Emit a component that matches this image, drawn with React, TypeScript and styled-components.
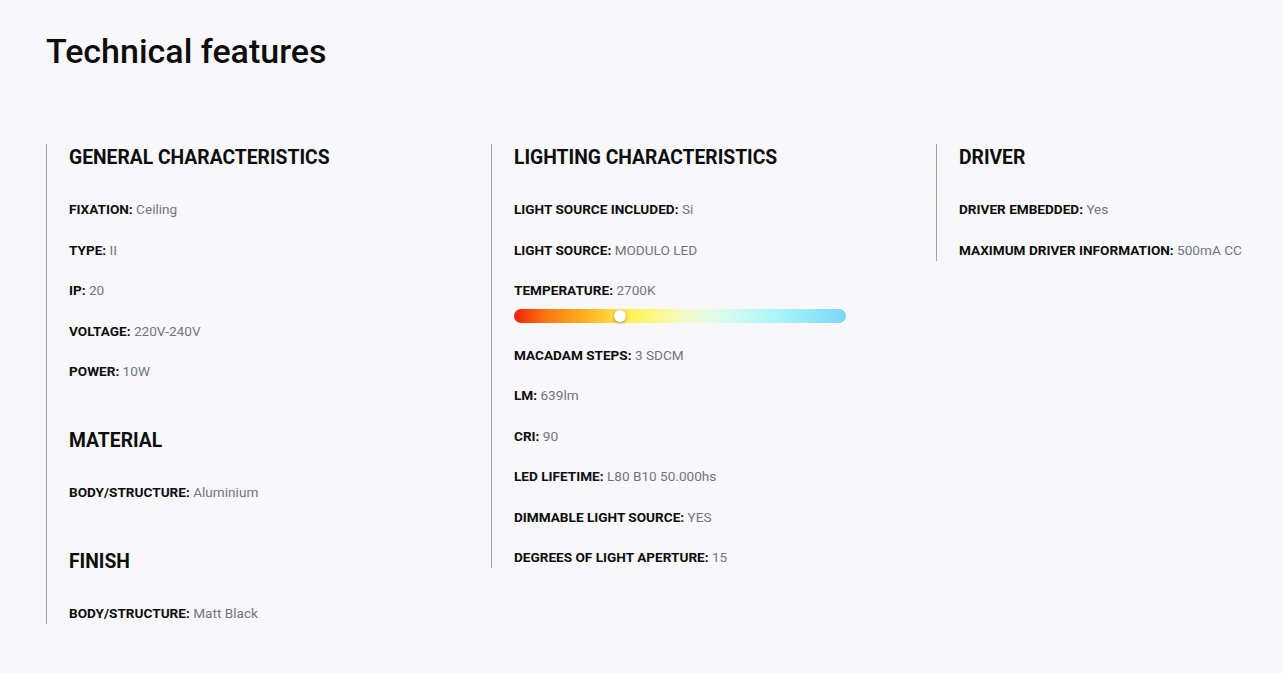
import styled, { createGlobalStyle } from "styled-components";

const GlobalStyle = createGlobalStyle`
  html, body {
    margin: 0;
    padding: 0;
    background: #f8f8fa;
  }
  body {
    font-family: Roboto, "Liberation Sans", Arial, sans-serif;
    color: #111;
  }
`;

const Page = styled.main`
  padding: 28px 0 40px 46px;
  min-height: 673px;
  box-sizing: border-box;
`;

const Title = styled.h1`
  margin: 0 0 70px;
  font-size: 34px;
  line-height: 46px;
  font-weight: 500;
  color: #0d0d0d;
`;

const Columns = styled.div`
  display: grid;
  grid-template-columns: 445px 445px 1fr;
  align-items: start;
`;

const Column = styled.div`
  border-left: 1px solid #a3a3a3;
  padding-left: 22px;
  padding-bottom: 2px;
  display: flex;
  flex-direction: column;
  gap: 47px;
`;

const Section = styled.section`
  display: flex;
  flex-direction: column;
`;

const Heading = styled.h2`
  margin: 1px 0 29px;
  font-size: 19.3px;
  line-height: 26px;
  font-weight: 700;
  color: #0d0d0d;
`;

const Rows = styled.div`
  display: flex;
  flex-direction: column;
  gap: 22.5px;
`;

const Row = styled.div`
  font-size: 13.6px;
  line-height: 18px;
  white-space: nowrap;
`;

const Label = styled.span`
  font-weight: 700;
  color: #0d0d0d;
`;

const Value = styled.span`
  color: #6f7680;
`;

const Track = styled.div`
  position: relative;
  margin-top: 10px;
  width: 332px;
  height: 14px;
  border-radius: 7px;
  background: linear-gradient(
    to right,
    #f2220c 0%,
    #fb7a12 10%,
    #ffb41f 22%,
    #fff35a 36%,
    #f3fbcc 52%,
    #d8fbef 64%,
    #a9f5fa 80%,
    #7bd6f6 100%
  );
`;

const Thumb = styled.div`
  position: absolute;
  top: 1px;
  width: 12px;
  height: 12px;
  border-radius: 50%;
  background: #fff;
  box-shadow: 0 1px 3px rgba(0, 0, 0, 0.35);
  transform: translateX(-50%);
`;

type Item = [string, string];

function Spec({ label, value }: { label: string; value: string }) {
  return (
    <Row>
      <Label>{label}:</Label> <Value>{value}</Value>
    </Row>
  );
}

function Block({ title, items }: { title: string; items: Item[] }) {
  return (
    <Section>
      <Heading>{title}</Heading>
      <Rows>
        {items.map(([l, v]) => (
          <Spec key={l} label={l} value={v} />
        ))}
      </Rows>
    </Section>
  );
}

export default function App() {
  const temp = 2700;
  const pos = ((temp - 1000) / (12000 - 1000)) * 100 * 2.07;

  return (
    <Page>
      <GlobalStyle />
      <Title>Technical features</Title>
      <Columns>
        <Column>
          <Block
            title="GENERAL CHARACTERISTICS"
            items={[
              ["FIXATION", "Ceiling"],
              ["TYPE", "II"],
              ["IP", "20"],
              ["VOLTAGE", "220V-240V"],
              ["POWER", "10W"],
            ]}
          />
          <Block title="MATERIAL" items={[["BODY/STRUCTURE", "Aluminium"]]} />
          <Block title="FINISH" items={[["BODY/STRUCTURE", "Matt Black"]]} />
        </Column>
        <Column>
          <Section>
            <Heading>LIGHTING CHARACTERISTICS</Heading>
            <Rows>
              <Spec label="LIGHT SOURCE INCLUDED" value="Si" />
              <Spec label="LIGHT SOURCE" value="MODULO LED" />
              <div>
                <Spec label="TEMPERATURE" value={`${temp}K`} />
                <Track>
                  <Thumb style={{ left: `${pos}%` }} />
                </Track>
              </div>
              <Spec label="MACADAM STEPS" value="3 SDCM" />
              <Spec label="LM" value="639lm" />
              <Spec label="CRI" value="90" />
              <Spec label="LED LIFETIME" value="L80 B10 50.000hs" />
              <Spec label="DIMMABLE LIGHT SOURCE" value="YES" />
              <Spec label="DEGREES OF LIGHT APERTURE" value="15" />
            </Rows>
          </Section>
        </Column>
        <Column>
          <Block
            title="DRIVER"
            items={[
              ["DRIVER EMBEDDED", "Yes"],
              ["MAXIMUM DRIVER INFORMATION", "500mA CC"],
            ]}
          />
        </Column>
      </Columns>
    </Page>
  );
}
